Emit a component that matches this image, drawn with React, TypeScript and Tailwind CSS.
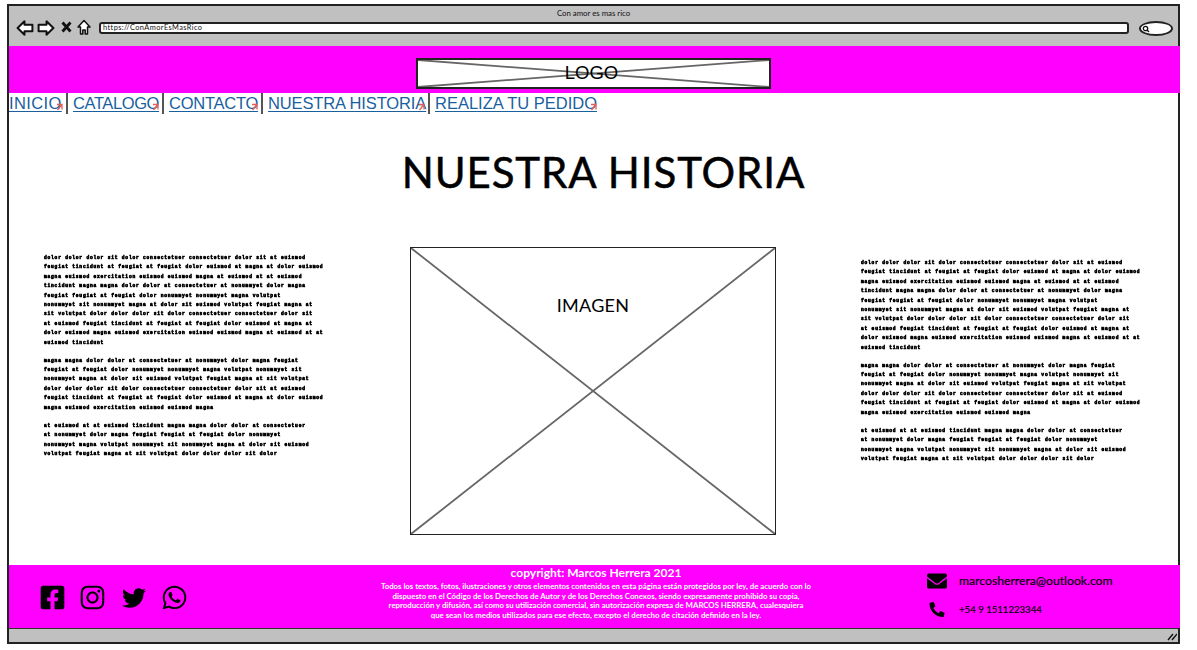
import React from "react";
import { FaFacebookSquare, FaInstagram, FaTwitter, FaWhatsapp, FaEnvelope, FaPhoneAlt } from "react-icons/fa";

const P1 = [
  "dolor dolor dolor sit dolor consectetuer consectetuer dolor sit at euismod",
  "feugiat tincidunt at feugiat at feugiat dolor euismod at magna at dolor euismod",
  "magna euismod exercitation euismod euismod magna at euismod at at euismod",
  "tincidunt magna magna dolor dolor at consectetuer at nonummyet dolor magna",
  "feugiat feugiat at feugiat dolor nonummyet nonummyet magna volutpat",
  "nonummyet sit nonummyet magna at dolor sit euismod volutpat feugiat magna at",
  "sit volutpat dolor dolor dolor sit dolor consectetuer consectetuer dolor sit",
  "at euismod feugiat tincidunt at feugiat at feugiat dolor euismod at magna at",
  "dolor euismod magna euismod exercitation euismod euismod magna at euismod at at",
  "euismod tincidunt",
];
const P2 = [
  "magna magna dolor dolor at consectetuer at nonummyet dolor magna feugiat",
  "feugiat at feugiat dolor nonummyet nonummyet magna volutpat nonummyet sit",
  "nonummyet magna at dolor sit euismod volutpat feugiat magna at sit volutpat",
  "dolor dolor dolor sit dolor consectetuer consectetuer dolor sit at euismod",
  "feugiat tincidunt at feugiat at feugiat dolor euismod at magna at dolor euismod",
  "magna euismod exercitation euismod euismod magna",
];
const P3 = [
  "at euismod at at euismod tincidunt magna magna dolor dolor at consectetuer",
  "at nonummyet dolor magna feugiat feugiat at feugiat dolor nonummyet",
  "nonummyet magna volutpat nonummyet sit nonummyet magna at dolor sit euismod",
  "volutpat feugiat magna at sit volutpat dolor dolor dolor sit dolor",
];

function Greek() {
  return (
    <div className="font-['Liberation_Mono',monospace] text-[4.6px] leading-[9.4px] tracking-[0.78px] font-bold text-black whitespace-pre [-webkit-text-stroke:0.6px_black] blur-[0.35px] flex flex-col gap-[8.6px]">
      {[P1, P2, P3].map((p, i) => (
        <p key={i}>
          {p.map((l, j) => (
            <span key={j} className="block">{l}</span>
          ))}
        </p>
      ))}
    </div>
  );
}

function Cross({ stroke = 1.8 }: { stroke?: number }) {
  return (
    <svg className="absolute inset-0 w-full h-full" preserveAspectRatio="none" viewBox="0 0 100 100">
      <line x1="0" y1="0" x2="100" y2="100" stroke="#666" strokeWidth={stroke} vectorEffect="non-scaling-stroke" />
      <line x1="100" y1="0" x2="0" y2="100" stroke="#666" strokeWidth={stroke} vectorEffect="non-scaling-stroke" />
    </svg>
  );
}

function NavLink({ label, cls }: { label: string; cls: string }) {
  return (
    <span className={`relative block ${cls}`}>
      <a className="text-[#1a5f9e] underline decoration-1 underline-offset-[2px] whitespace-nowrap">{label}</a>
      <svg className="absolute right-[-1px] top-[10px]" width="7" height="8" viewBox="0 0 7 8">
        <path d="M1 1.5H6V6.5M6 1.5L1.5 7" fill="none" stroke="#e0605c" strokeWidth="1.3" />
      </svg>
    </span>
  );
}

function Sep() {
  return <span className="block w-[2px] h-[21px] bg-[#555] ml-[4px] mr-[5px]" />;
}

const arrow = "M1.5 7.5L8 1.2V4.4H15.5V10.6H8V13.8Z";

export default function App() {
  return (
    <div className="w-[1197px] h-[650px] bg-white pl-[7px] pt-[4px] font-['Lato',sans-serif] overflow-hidden">
      <div className="w-[1173px] h-[640px] border-2 border-[#222] bg-[#c0c0c0] flex flex-col">
        {/* browser chrome */}
        <div className="h-[40px] shrink-0 flex flex-col">
          <div className="h-[13px] text-center text-[7.8px] leading-[14px] text-[#111]">Con amor es mas rico</div>
          <div className="flex-1 flex items-start">
            <div className="flex items-center ml-[7px] h-[20px]">
              <svg width="18" height="16" viewBox="0 0 17 15" className="mr-[3px] -mt-[2px]">
                <path d={arrow} fill="#fff" stroke="#111" strokeWidth="1.9" strokeLinejoin="round" />
              </svg>
              <svg width="18" height="16" viewBox="0 0 17 15" className="-scale-x-100 mr-[6px] -mt-[2px]">
                <path d={arrow} fill="#fff" stroke="#111" strokeWidth="1.9" strokeLinejoin="round" />
              </svg>
              <svg width="11" height="12" viewBox="0 0 11 12" className="mr-[5px] -mt-[5px]">
                <path d="M1.5 1.5L9.5 10.5M9.5 1.5L1.5 10.5" stroke="#111" strokeWidth="2.8" />
              </svg>
              <svg width="14" height="17" viewBox="0 0 14 16" className="-mt-[3px]">
                <path d="M7 1L13 7.5H10.5V14.5H8.2V10.5H5.8V14.5H3.5V7.5H1Z" fill="#fff" stroke="#111" strokeWidth="1.5" strokeLinejoin="round" />
              </svg>
            </div>
            <div className="ml-[8px] mt-[3px] w-[1030px] h-[12px] bg-white border-2 border-[#222] rounded-[3px] text-[7.4px] leading-[8px] pl-[2px] text-[#111] tracking-[0.42px]">
              https://ConAmorEsMasRico
            </div>
            <div className="relative ml-[10px] mt-[2px] w-[34px] h-[15px] bg-white border-2 border-[#222] rounded-[50%]">
              <svg className="absolute left-[1px] top-[2px]" width="8" height="8" viewBox="0 0 8 8">
                <circle cx="3.5" cy="3.5" r="2.2" fill="none" stroke="#111" strokeWidth="1.3" />
                <path d="M5 5L7 7" stroke="#111" strokeWidth="1.4" />
              </svg>
            </div>
          </div>
        </div>

        {/* page header */}
        <header className="h-[47px] shrink-0 bg-[#ff00ff] mr-[-2px] flex items-start justify-center pt-[12px] pr-[2px]">
          <div className="relative w-[355px] h-[31px] bg-white border-2 border-[#222] flex items-center justify-center">
            <Cross />
            <span className="relative -left-[2px] font-['Liberation_Sans',sans-serif] text-[18.5px] leading-none text-black">LOGO</span>
          </div>
        </header>

        {/* page body */}
        <main className="flex-1 bg-white flex flex-col min-h-0">
          <nav className="h-[22px] shrink-0 flex items-start font-['Liberation_Sans',sans-serif] text-[16.5px] leading-[20px]">
            <NavLink label="INICIO" cls="w-[53px] tracking-[0.4px]" />
            <Sep />
            <NavLink label="CATALOGO" cls="w-[85px] tracking-[-0.4px]" />
            <Sep />
            <NavLink label="CONTACTO" cls="w-[88px] tracking-[-0.25px]" />
            <Sep />
            <NavLink label="NUESTRA HISTORIA" cls="w-[156px] tracking-[-0.12px]" />
            <Sep />
            <NavLink label="REALIZA TU PEDIDO" cls="w-[161px]" />
          </nav>
          <h1 className="mt-[33px] pl-[20px] text-center text-[42px] leading-[48px] tracking-[0.9px] font-normal text-black [-webkit-text-stroke:0.5px_black]">NUESTRA HISTORIA</h1>
          <div className="mt-[51px] flex items-start">
            <div className="w-[401px] pl-[35px] pt-[6px] shrink-0">
              <Greek />
            </div>
            <div className="relative w-[366px] h-[288px] shrink-0 border-[1.5px] border-[#222]">
              <Cross />
              <span className="absolute left-0 right-0 top-[46px] text-center text-[18px] leading-[22px] tracking-[0.25px] text-black">IMAGEN</span>
            </div>
            <div className="pl-[85px] pt-[11px]">
              <Greek />
            </div>
          </div>
        </main>

        {/* footer */}
        <footer className="h-[63px] shrink-0 bg-[#ff00ff] mr-[-2px] flex items-start text-black">
          <div className="w-[367px] pl-[30px] pt-[19px] flex items-center gap-[12.5px] shrink-0 text-[27px]">
            <FaFacebookSquare />
            <FaInstagram />
            <FaTwitter className="text-[24px] ml-[4px] mr-[2.5px]" />
            <FaWhatsapp />
          </div>
          <div className="w-[440px] shrink-0 text-center text-white">
            <div className="text-[12px] leading-[15px] font-bold">copyright: Marcos Herrera 2021</div>
            <div className="text-[7.8px] leading-[9.6px] font-bold whitespace-nowrap mt-[2px]">
              <div>Todos los textos, fotos, ilustraciones y otros elementos contenidos en esta página están protegidos por ley, de acuerdo con lo</div>
              <div>dispuesto en el Código de los Derechos de Autor y de los Derechos Conexos, siendo expresamente prohibido su copia,</div>
              <div>reproducción y difusión, así como su utilización comercial, sin autorización expresa de MARCOS HERRERA, cualesquiera</div>
              <div>que sean los medios utilizados para ese efecto, excepto el derecho de citación definido en la ley.</div>
            </div>
          </div>
          <div className="ml-[111px] flex flex-col">
            <div className="flex items-center h-[28px] pt-[3px]">
              <FaEnvelope className="text-[20px] w-[20px] mr-[12px]" />
              <span className="text-[12.2px] leading-[16px] [-webkit-text-stroke:0.2px_black]">marcosherrera@outlook.com</span>
            </div>
            <div className="flex items-center h-[28px] pt-[5px]">
              <FaPhoneAlt className="text-[15px] w-[20px] mr-[12px]" />
              <span className="text-[9.6px] leading-[14px] [-webkit-text-stroke:0.15px_black]">+54 9 1511223344</span>
            </div>
          </div>
        </footer>

        {/* status bar */}
        <div className="relative h-[14px] shrink-0 border-t-[1.5px] border-[#333]">
          <svg className="absolute right-[1px] top-[3px]" width="10" height="9" viewBox="0 0 10 9">
            <path d="M1 8L6 2M5 8L10 2" stroke="#111" strokeWidth="1.4" />
          </svg>
        </div>
      </div>
    </div>
  );
}
